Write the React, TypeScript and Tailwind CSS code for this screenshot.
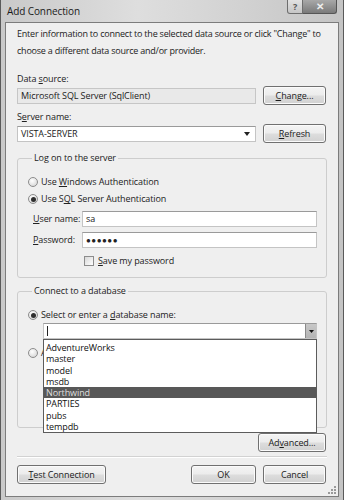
import React from 'react';

const Btn: React.FC<{ className?: string; children: React.ReactNode }> = ({ className = '', children }) => (
  <div
    className={`flex items-center justify-center h-[19px] border border-[#707070] rounded-[3px] bg-[linear-gradient(#f4f4f4,#ececec_48%,#dddddd_52%,#d1d1d1)] text-[#1b1b1b] shadow-[inset_0_0_0_1px_#fbfbfb] ${className}`}
  >
    {children}
  </div>
);

const Radio: React.FC<{ checked?: boolean }> = ({ checked }) => (
  <span className="flex items-center justify-center w-[10px] h-[10px] rounded-full border border-[#8c8c8c] bg-[radial-gradient(circle_at_40%_35%,#ffffff,#cfcfcf)] shrink-0">
    {checked && <span className="w-[5px] h-[5px] rounded-full bg-[#2e2e2e]" />}
  </span>
);

const TextBox: React.FC<{ className?: string; children?: React.ReactNode }> = ({ className = '', children }) => (
  <div
    className={`flex items-center h-[16px] pl-[3px] bg-white border border-[#c4c4c4] border-t-[#9a9a9a] ${className}`}
  >
    {children}
  </div>
);

const databases = ['AdventureWorks', 'master', 'model', 'msdb', 'Northwind', 'PARTIES', 'pubs', 'tempdb'];

export default function App() {
  return (
    <div className="w-[344px] h-[500px] overflow-hidden bg-[linear-gradient(90deg,#c9c9c9,#dedede_40%,#d2d2d2_70%,#c4c4c4)] border-l border-r border-[#5a5a5a] text-[9px] text-[#222] font-['Open_Sans',sans-serif] tracking-[-0.1px]">
      {/* title bar */}
      <div className="flex items-start justify-between h-[22px] pl-[6px] pr-[6px]">
        <div className="pt-[4px] text-[10px] text-[#1a1a1a]">Add Connection</div>
        <div className="flex">
          <div className="flex items-center justify-center w-[16px] h-[14px] border border-[#6e6e6e] border-t-0 rounded-bl-[3px] bg-[linear-gradient(#e2e2e2,#c6c6c6)] text-[9px] font-bold text-[#555]">
            ?
          </div>
          <div className="flex items-center justify-center w-[34px] h-[14px] border border-[#555] border-t-0 border-l-0 rounded-br-[3px] bg-[linear-gradient(#a8a8a8,#7a7a7a)] text-[10px] font-bold text-[#eee]">
            ✕
          </div>
        </div>
      </div>

      {/* client area */}
      <div className="ml-[4px] w-[334px] h-[475px] border border-[#7c7c7c] bg-[#efefef] px-[11px] relative">
        <p className="pt-[2px] leading-[17px] tracking-[-0.22px] whitespace-nowrap">
          Enter information to connect to the selected data source or click "Change" to
          <br />
          choose a different data source and/or provider.
        </p>

        <div className="mt-[12px] h-[15px] leading-[15px]">
          Data <u>s</u>ource:
        </div>
        <div className="flex items-center justify-between h-[19px]">
          <div className="flex items-center w-[239px] h-[16px] pl-[3px] bg-[#e9e9e9] border border-[#c6c6c6]">
            Microsoft SQL Server (SqlClient)
          </div>
          <Btn className="w-[63px] mr-[1px]">
            <u>C</u>hange...
          </Btn>
        </div>

        <div className="mt-[4px] h-[15px] leading-[15px]">
          S<u>e</u>rver name:
        </div>
        <div className="flex items-center justify-between h-[19px]">
          <TextBox className="w-[239px] justify-between pr-[5px]">
            <span>VISTA-SERVER</span>
            <svg width="6" height="4" viewBox="0 0 6 4">
              <path d="M0 0h6L3 4z" fill="#222" />
            </svg>
          </TextBox>
          <Btn className="w-[63px] mr-[1px]">
            <u>R</u>efresh
          </Btn>
        </div>

        {/* log on group */}
        <fieldset className="mt-[8px] border border-[#cdcdcd] rounded-[3px] pl-[10px] pr-[9px] pb-[8px]">
          <legend className="ml-[4px] px-[2px] h-[14px] leading-[14px]">Log on to the server</legend>
          <div className="mt-[9px] flex items-center gap-[3px] h-[16px]">
            <Radio />
            <span>
              Use <u>W</u>indows Authentication
            </span>
          </div>
          <div className="mt-[1px] flex items-center gap-[3px] h-[16px]">
            <Radio checked />
            <span>
              Use S<u>Q</u>L Server Authentication
            </span>
          </div>
          <div className="mt-[4px] flex items-center h-[16px]">
            <span className="w-[54px] pl-[5px]">
              <u>U</u>ser name:
            </span>
            <TextBox className="flex-1">sa</TextBox>
          </div>
          <div className="mt-[5px] flex items-center h-[16px]">
            <span className="w-[54px] pl-[5px]">
              <u>P</u>assword:
            </span>
            <TextBox className="flex-1 tracking-[0.5px] text-[8px]">●●●●●●</TextBox>
          </div>
          <div className="mt-[5px] flex items-center h-[16px] pl-[56px] gap-[4px]">
            <span className="w-[10px] h-[10px] border border-[#8c8c8c] bg-[linear-gradient(135deg,#d8d8d8,#ffffff)]" />
            <span>
              <u>S</u>ave my password
            </span>
          </div>
        </fieldset>

        {/* database group */}
        <fieldset className="mt-[6px] border border-[#cdcdcd] rounded-[3px] pl-[10px] pr-[9px] h-[144px]">
          <legend className="ml-[4px] px-[2px] h-[14px] leading-[14px]">Connect to a database</legend>
          <div className="mt-[9px] flex items-center gap-[3px] h-[16px]">
            <Radio checked />
            <span>
              Select or enter a <u>d</u>atabase name:
            </span>
          </div>
          <div className="relative ml-[15px]">
            <TextBox className="justify-between pr-0">
              <span className="w-[1px] h-[10px] bg-[#222]" />
              <span className="flex items-center justify-center w-[11px] h-[14px] border-l border-[#8a8a8a] bg-[linear-gradient(#c8c8c8,#b4b4b4)]">
                <svg width="5" height="3" viewBox="0 0 5 3">
                  <path d="M0 0h5L2.5 3z" fill="#111" />
                </svg>
              </span>
            </TextBox>
            <div className="absolute left-0 top-full w-full h-[94px] border border-[#5c5c5c] bg-white pt-[2px] z-10">
              {databases.map(d => (
                <div
                  key={d}
                  className={`h-[11.3px] leading-[11.3px] pl-[2px] ${d === 'Northwind' ? 'bg-[#585858] text-[#dedede]' : 'text-[#111]'}`}
                >
                  {d}
                </div>
              ))}
            </div>
          </div>
          <div className="mt-[6px] flex items-center gap-[3px] h-[16px]">
            <Radio />
            {/* the open list hides the rest of "Attach a database file:" */}
            <span>A</span>
          </div>
        </fieldset>

        <div className="mt-[5px] flex justify-end">
          <Btn className="w-[68px] mr-[1px]">
            Ad<u>v</u>anced...
          </Btn>
        </div>

        <div className="mt-[4px] h-0 border-t border-[#d2d2d2] border-b-white border-b" />

        <div className="mt-[7px] flex items-center">
          <Btn className="w-[89px]">
            <u>T</u>est Connection
          </Btn>
          <div className="flex-1" />
          <Btn className="w-[65px]">OK</Btn>
          <Btn className="w-[63px] ml-[7px] mr-[1px]">Cancel</Btn>
        </div>

        {/* size grip */}
        <svg className="absolute right-[1px] bottom-[1px]" width="10" height="10" viewBox="0 0 10 10">
          {[
            [8, 2], [8, 5], [5, 5], [8, 8], [5, 8], [2, 8],
          ].map(([x, y], i) => (
            <rect key={i} x={x - 1} y={y - 1} width="2" height="2" fill="#9a9a9a" />
          ))}
        </svg>
      </div>
    </div>
  );
}
